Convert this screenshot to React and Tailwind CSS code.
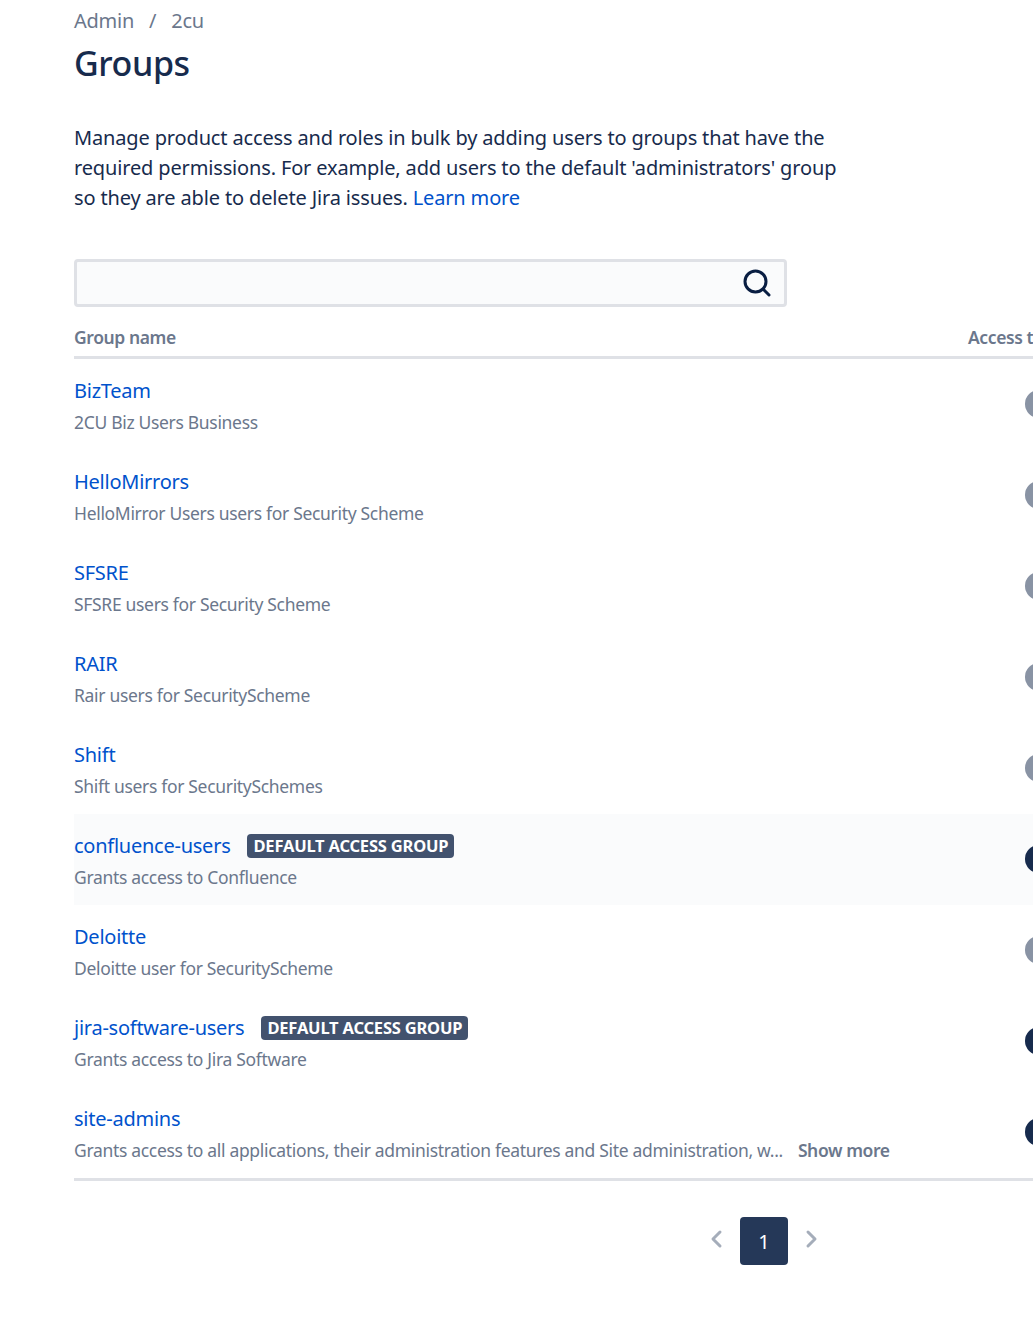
const groups = [
  { name: "BizTeam", desc: "2CU Biz Users Business" },
  { name: "HelloMirrors", desc: "HelloMirror Users users for Security Scheme" },
  { name: "SFSRE", desc: "SFSRE users for Security Scheme" },
  { name: "RAIR", desc: "Rair users for SecurityScheme" },
  { name: "Shift", desc: "Shift users for SecuritySchemes" },
  { name: "confluence-users", desc: "Grants access to Confluence", isDefault: true, active: true },
  { name: "Deloitte", desc: "Deloitte user for SecurityScheme" },
  { name: "jira-software-users", desc: "Grants access to Jira Software", isDefault: true, active: true },
  {
    name: "site-admins",
    desc: "Grants access to all applications, their administration features and Site administration, w...",
    more: true,
    active: true,
  },
];

const Chevron = ({ d }) => (
  <svg width="24" height="24" viewBox="0 0 24 24" fill="none" stroke="#a5adba" strokeWidth="3" strokeLinecap="round" strokeLinejoin="round">
    <path d={d} />
  </svg>
);

const GroupRow = ({ group }) => (
  <div className={`flex h-[91px] ${group.name === "confluence-users" ? "bg-[#fafbfc]" : "bg-white"}`}>
    <div className="w-[951px] shrink-0 pt-[17px]">
      <div className="flex items-center h-[30px]">
        <a className="text-[20px] leading-[30px] text-[#0052cc] tracking-[-0.25px]">{group.name}</a>
        {group.isDefault && (
          <span className="ml-[17px] h-[24px] px-[6px] rounded-[4px] bg-[#42526e] text-white text-[16.5px] leading-[24px] font-bold tracking-[-0.2px]">
            DEFAULT ACCESS GROUP
          </span>
        )}
      </div>
      <div className="mt-[1px] flex h-[30px] items-center text-[#6b778c] text-[17.5px] leading-[30px] tracking-[-0.32px] whitespace-nowrap">
        <span>{group.desc}</span>
        {group.more && <span className="ml-[15px] font-semibold tracking-[-0.4px]">Show more</span>}
      </div>
    </div>
    <div className="flex items-center pb-[2px]">
      <div className={`w-[28px] h-[28px] rounded-full ${group.active ? "bg-[#172b4d]" : "bg-[#8993a4]"}`} />
    </div>
  </div>
);

export default function App() {
  return (
    <div className="w-[1033px] h-[1333px] overflow-hidden bg-white font-['Noto_Sans','Open_Sans',sans-serif]">
      <div className="w-[1200px] pl-[74px]">
        <div className="flex h-[42px] items-center text-[20px] text-[#6b778c] tracking-[-0.25px]">
          <span>Admin</span>
          <span className="mx-[15px]">/</span>
          <span>2cu</span>
        </div>
        <h1 className="text-[34px] leading-[44px] font-medium text-[#172b4d] tracking-[-0.4px] -mt-[1px]">Groups</h1>
        <p className="mt-[38px] w-[770px] text-[20px] leading-[30px] text-[#172b4d] tracking-[-0.15px]">
          Manage product access and roles in bulk by adding users to groups that have the required permissions. For example, add users to the default 'administrators' group so they are able to delete Jira issues.{" "}
          <a className="text-[#0052cc]">Learn more</a>
        </p>
        <div className="mt-[46px] w-[713px] h-[48px] flex items-center justify-end pr-[12px] rounded-[4px] border-[3px] border-[#dfe1e6] bg-[#fafbfc]">
          <svg width="30" height="30" viewBox="0 0 30 30" fill="none" stroke="#091e42" strokeWidth="3" strokeLinecap="round">
            <circle cx="13.5" cy="13.5" r="10.5" />
            <path d="M21.5 21.5 L27 27" />
          </svg>
        </div>
        <div className="flex h-[52px] border-b-[3px] border-[#dfe1e6] pt-[15px] text-[#6b778c] text-[17.5px] leading-[30px] font-semibold tracking-[-0.4px]">
          <div className="w-[894px] shrink-0">Group name</div>
          <div>Access to</div>
        </div>
        <div className="border-b-[3px] border-[#dfe1e6]">
          {groups.map((g) => (
            <GroupRow key={g.name} group={g} />
          ))}
        </div>
        <div className="mt-[36px] w-[1150px]">
          <div className="ml-[630px] flex items-center">
            <button className="w-[24px] h-[48px] flex items-start pt-[10px]"><Chevron d="M16 5 L9 12 L16 19" /></button>
            <span className="w-[48px] h-[48px] mx-[12px] rounded-[4px] bg-[#253858] text-white text-[20px] flex items-center justify-center pt-[2px]">1</span>
            <button className="w-[24px] h-[48px] flex items-start pt-[10px]"><Chevron d="M8 5 L15 12 L8 19" /></button>
          </div>
        </div>
      </div>
    </div>
  );
}
